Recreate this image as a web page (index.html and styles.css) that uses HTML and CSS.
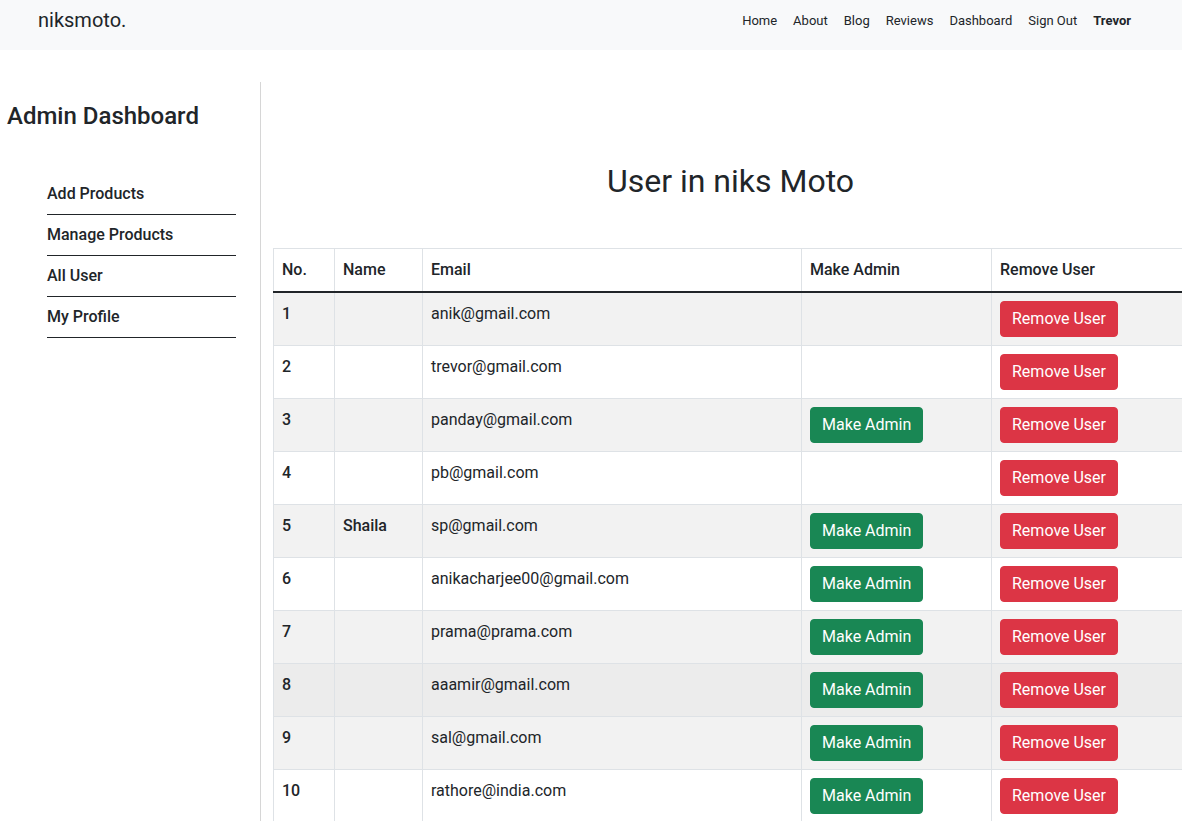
FILE: index.html
```html
<!DOCTYPE html>
<html lang="en">
<head>
<meta charset="utf-8">
<title>niksmoto. - Admin Dashboard</title>
<link rel="stylesheet" href="styles.css">
</head>
<body>
<nav class="topbar">
  <a class="brand" href="#">niksmoto.</a>
  <ul class="nav-links">
    <li><a href="#">Home</a></li>
    <li><a href="#">About</a></li>
    <li><a href="#">Blog</a></li>
    <li><a href="#">Reviews</a></li>
    <li><a href="#">Dashboard</a></li>
    <li><a href="#">Sign Out</a></li>
    <li><a class="user" href="#">Trevor</a></li>
  </ul>
</nav>
<div class="layout">
  <aside class="sidebar">
    <h3 class="side-title">Admin Dashboard</h3>
    <ul class="side-menu">
      <li><a href="#">Add Products</a></li>
      <li><a href="#">Manage Products</a></li>
      <li><a href="#">All User</a></li>
      <li><a href="#">My Profile</a></li>
    </ul>
  </aside>
  <main class="main">
    <h2 class="page-title">User in niks Moto</h2>
    <table class="users">
      <thead>
        <tr>
          <th class="c-no">No.</th>
          <th class="c-name">Name</th>
          <th class="c-email">Email</th>
          <th class="c-admin">Make Admin</th>
          <th class="c-remove">Remove User</th>
        </tr>
      </thead>
      <tbody>
        <tr><th>1</th><th></th><td>anik@gmail.com</td><td></td><td><button class="btn btn-red">Remove User</button></td></tr>
        <tr><th>2</th><th></th><td>trevor@gmail.com</td><td></td><td><button class="btn btn-red">Remove User</button></td></tr>
        <tr><th>3</th><th></th><td>panday@gmail.com</td><td><button class="btn btn-green">Make Admin</button></td><td><button class="btn btn-red">Remove User</button></td></tr>
        <tr><th>4</th><th></th><td>pb@gmail.com</td><td></td><td><button class="btn btn-red">Remove User</button></td></tr>
        <tr><th>5</th><th>Shaila</th><td>sp@gmail.com</td><td><button class="btn btn-green">Make Admin</button></td><td><button class="btn btn-red">Remove User</button></td></tr>
        <tr><th>6</th><th></th><td>anikacharjee00@gmail.com</td><td><button class="btn btn-green">Make Admin</button></td><td><button class="btn btn-red">Remove User</button></td></tr>
        <tr><th>7</th><th></th><td>prama@prama.com</td><td><button class="btn btn-green">Make Admin</button></td><td><button class="btn btn-red">Remove User</button></td></tr>
        <tr class="hovered"><th>8</th><th></th><td>aaamir@gmail.com</td><td><button class="btn btn-green">Make Admin</button></td><td><button class="btn btn-red">Remove User</button></td></tr>
        <tr><th>9</th><th></th><td>sal@gmail.com</td><td><button class="btn btn-green">Make Admin</button></td><td><button class="btn btn-red">Remove User</button></td></tr>
        <tr><th>10</th><th></th><td>rathore@india.com</td><td><button class="btn btn-green">Make Admin</button></td><td><button class="btn btn-red">Remove User</button></td></tr>
      </tbody>
    </table>
  </main>
</div>
</body>
</html>
```
FILE: styles.css
```css
* { box-sizing: border-box; }
html, body { margin: 0; padding: 0; overflow-x: hidden; }
body {
  font-family: Roboto, "Liberation Sans", sans-serif;
  font-size: 16px;
  line-height: 1.5;
  color: #212529;
  background: #fff;
}
a { color: #212529; text-decoration: none; }

.topbar {
  height: 50px;
  background: #f8f9fa;
  display: flex;
  align-items: flex-start;
  justify-content: space-between;
  padding: 8px 43px 0 38px;
}
.brand { font-size: 20px; line-height: 24px; }
.nav-links {
  list-style: none;
  margin: 1px 0 0;
  padding: 0;
  display: flex;
}
.nav-links a {
  display: block;
  font-size: 13px;
  line-height: 24px;
  padding: 0 8px;
}
.nav-links .user { font-weight: 700; }

.layout {
  display: flex;
  margin-top: 32px;
  width: 1188px;
}
.sidebar {
  width: 261px;
  flex: none;
  border-right: 1px solid #d6d6d6;
  min-height: 760px;
  padding-left: 7px;
}
.side-title {
  margin: 20px 0 0;
  font-size: 24px;
  font-weight: 500;
  line-height: 28px;
}
.side-menu {
  list-style: none;
  margin: 44px 0 0 40px;
  padding: 0;
  width: 189px;
}
.side-menu li {
  border-bottom: 1px solid #212529;
  padding: 8px 0;
}
.side-menu a { font-weight: 500; line-height: 24px; display: block; }

.main {
  flex: 1;
  padding-left: 12px;
}
.page-title {
  margin: 77px 0 0;
  text-align: center;
  font-size: 32px;
  font-weight: 400;
  line-height: 44px;
}
.users {
  margin-top: 45px;
  width: 100%;
  border-collapse: collapse;
  border: 1px solid #dee2e6;
}
.users th, .users td {
  border: 1px solid #dee2e6;
  padding: 8px;
  text-align: left;
  vertical-align: top;
  line-height: 24px;
}
.users th { font-weight: 500; }
.users thead th {
  border-bottom: 2px solid #212529;
  padding: 9px 8px;
}
.users tbody td, .users tbody th { padding-top: 9px; padding-bottom: 7px; }
.users tbody tr:nth-child(odd) { background: #f2f2f2; }
.users tbody tr.hovered { background: #ececec; }
.c-no { width: 61px; }
.c-name { width: 88px; }
.c-email { width: 379px; }
.c-admin { width: 190px; }

.btn {
  font-family: inherit;
  font-size: 16px;
  line-height: 24px;
  height: 36px;
  padding: 5px 11px;
  border: 1px solid transparent;
  border-radius: 4px;
  color: #fff;
  cursor: pointer;
  display: block;
  margin: -1px 0 1px;
}
.btn-red { background: #dc3545; border-color: #dc3545; }
.btn-green { background: #198754; border-color: #198754; }
```
